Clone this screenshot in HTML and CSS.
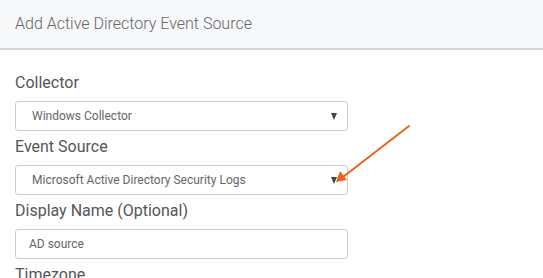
FILE: index.html
```html
<!DOCTYPE html>
<html lang="en">
<head>
    <meta charset="UTF-8">
    <title>Add Active Directory Event Source</title>
    <link rel="stylesheet" href="styles.css">
</head>
<body>
    <div class="modal">
        <header class="modal-header">
            <h1>Add Active Directory Event Source</h1>
        </header>

        <form class="modal-body">
            <label class="field-label">Collector</label>
            <div class="select-box">
                <span>Windows Collector</span>
                <i class="caret"></i>
            </div>

            <label class="field-label">Event Source</label>
            <div class="select-box">
                <span>Microsoft Active Directory Security Logs</span>
                <i class="caret"></i>
            </div>

            <label class="field-label">Display Name (Optional)</label>
            <div class="text-box">AD source</div>

            <label class="field-label">Timezone</label>
        </form>

        <!-- annotation arrow -->
        <svg class="callout" width="543" height="278" viewBox="0 0 543 278">
            <line x1="409" y1="126" x2="343" y2="177" stroke="#f0601e" stroke-width="2" stroke-linecap="round"/>
            <polygon points="336,182 340,171 347,180" fill="#f0601e"/>
        </svg>
    </div>
</body>
</html>
```

FILE: styles.css
```css
* {
    margin: 0;
    padding: 0;
    box-sizing: border-box;
}

body {
    font-family: Roboto, "Liberation Sans", sans-serif;
    background: #fff;
    color: #555;
    width: 543px;
    height: 278px;
    overflow: hidden;
}

.modal {
    position: relative;
}

.modal-header {
    height: 50px;
    background: #f7f8fa;
    border-bottom: 2px solid #d6d6d6;
    padding: 14px 15px 0;
}

.modal-header h1 {
    font-size: 16px;
    font-weight: 300;
    color: #666;
    line-height: 20px;
}

.modal-body {
    display: flex;
    flex-direction: column;
    padding: 23px 15px 0;
    width: 363px;
}

.field-label {
    font-size: 16px;
    font-weight: 400;
    color: #555;
    line-height: 20px;
    margin-bottom: 8px;
}

.select-box,
.text-box {
    height: 30px;
    border: 1px solid #ccc;
    border-radius: 3px;
    display: flex;
    align-items: center;
    font-size: 12px;
    color: #666;
    margin-bottom: 6px;
}

.select-box {
    justify-content: space-between;
    padding: 0 10px 0 16px;
}

.text-box {
    padding-left: 13px;
}

.caret {
    width: 0;
    height: 0;
    border-left: 3.5px solid transparent;
    border-right: 3.5px solid transparent;
    border-top: 7px solid #444;
}

.callout {
    position: absolute;
    left: 0;
    top: 0;
    pointer-events: none;
}
```
